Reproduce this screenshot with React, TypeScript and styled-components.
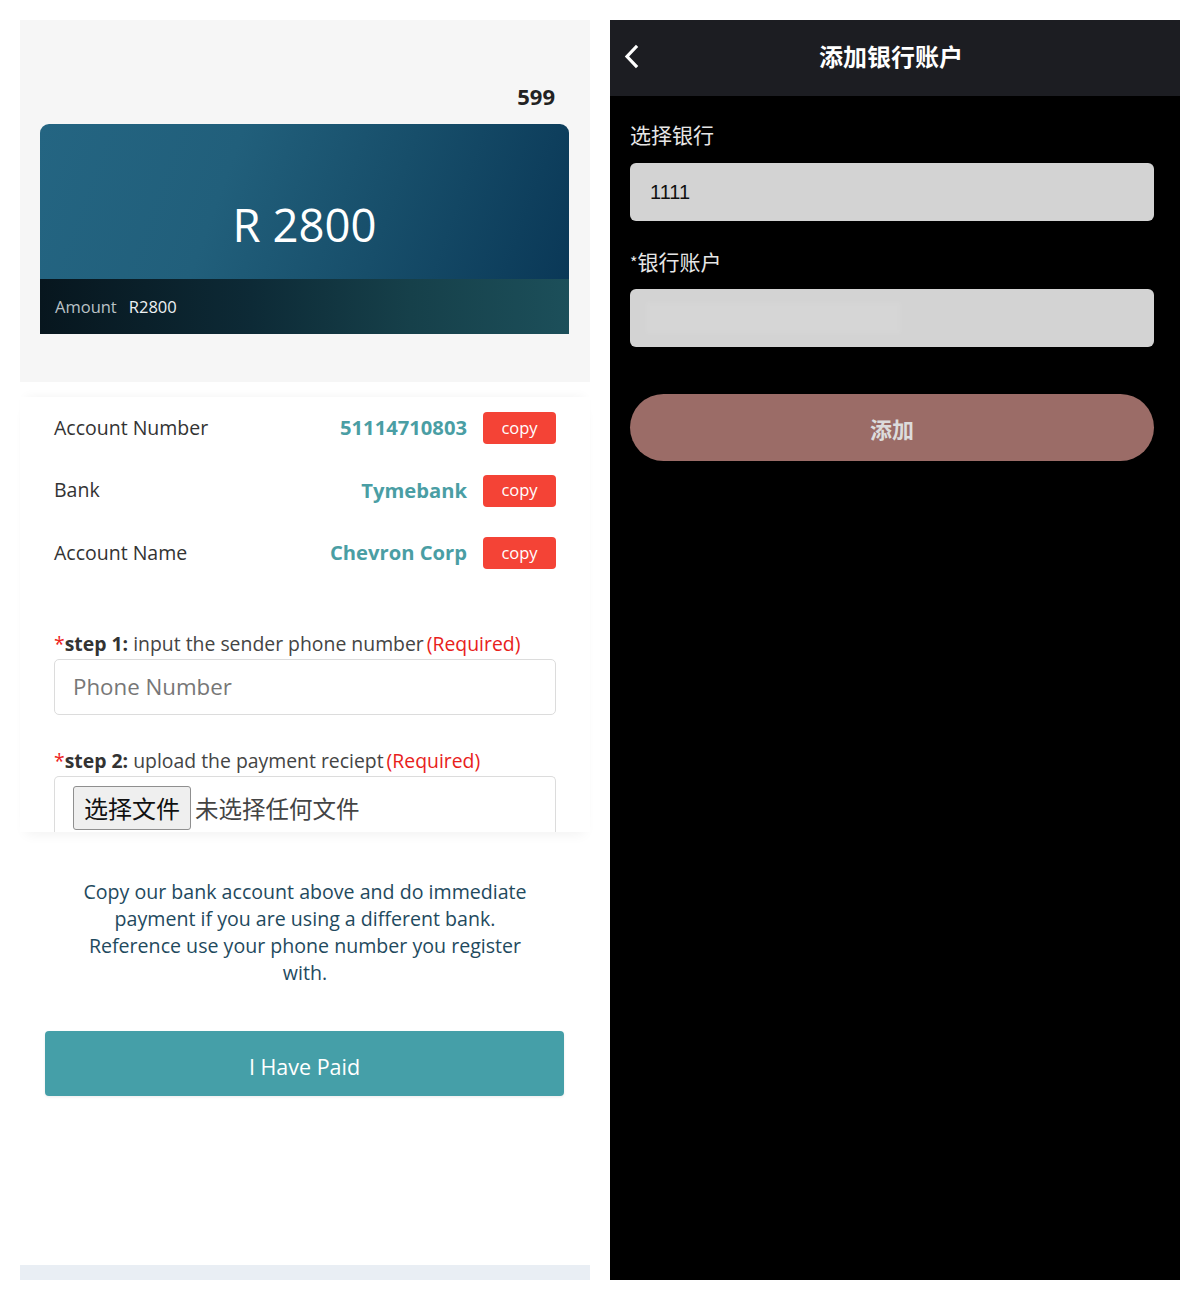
import React from "react";
import styled, { createGlobalStyle } from "styled-components";

const Global = createGlobalStyle`
  html, body { margin: 0; padding: 0; background: #ffffff; }
  * { box-sizing: border-box; }
  body { font-family: "Open Sans", "Noto Sans CJK SC", sans-serif; }
`;

const Page = styled.div`
  display: flex;
  gap: 20px;
  padding: 20px;
  width: 1200px;
`;

const LeftPanel = styled.div`
  width: 570px;
  height: 1260px;
  background: #ffffff;
  display: flex;
  flex-direction: column;
`;

const TopSection = styled.div`
  background: #f6f6f6;
  height: 362px;
  padding: 62px 20px 0 20px;
  display: flex;
  flex-direction: column;
`;

const Count = styled.div`
  font-family: "Open Sans", sans-serif;
  font-weight: 700;
  font-size: 22px;
  line-height: 30px;
  color: #222;
  text-align: right;
  padding-right: 15px;
  margin-bottom: 13px;
  margin-top: -1px;
`;

const AmountCard = styled.div`
  width: 529px;
  height: 210px;
  border-radius: 9px 9px 0 0;
  overflow: hidden;
  display: flex;
  flex-direction: column;
`;

const CardTop = styled.div`
  height: 155px;
  background: linear-gradient(110deg, #246582 0%, #215f7b 35%, #174e6a 65%, #0a3857 100%);
  display: flex;
  justify-content: center;
  padding-top: 70px;
`;

const BigAmount = styled.div`
  font-family: "Open Sans", sans-serif;
  font-size: 45.5px;
  line-height: 60px;
  height: 60px;
  color: #ffffff;
`;

const CardBand = styled.div`
  height: 55px;
  background: linear-gradient(90deg, #07161e 0%, #0d2a36 40%, #16404a 70%, #1c4f5a 100%);
  display: flex;
  align-items: center;
  gap: 12px;
  padding-left: 15px;
  font-size: 16.5px;
`;

const BandLabel = styled.span<{ $bright?: boolean }>`
  color: ${(p) => (p.$bright ? "#eef2f4" : "#b9c2c6")};
`;

const InfoCard = styled.div`
  margin-top: 15px;
  background: #fff;
  box-shadow: 0 -6px 10px -6px rgba(0, 0, 0, 0.05), 0 8px 12px -6px rgba(0, 0, 0, 0.06);
  padding: 0 34px;
  height: 435px;
  display: flex;
  flex-direction: column;
`;

const Row = styled.div`
  height: 62.5px;
  display: flex;
  align-items: center;
`;

const RowLabel = styled.div`
  flex: 1;
  font-size: 19.5px;
  color: #333;
  margin-top: -2px;
`;

const RowValue = styled.div`
  font-size: 20.2px;
  font-weight: 700;
  color: #4a9ea4;
  margin-right: 16px;
  margin-top: -2px;
`;

const CopyBtn = styled.button`
  width: 73px;
  height: 32px;
  border: none;
  border-radius: 4px;
  background: #f44336;
  color: #fff;
  font-family: "Open Sans", sans-serif;
  font-size: 16.5px;
  padding: 0 0 2px 0;
`;

const StepLabel = styled.div<{ $top: number }>`
  margin-top: ${(p) => p.$top}px;
  font-size: 19.4px;
  line-height: 24px;
  color: #444;
  margin-bottom: 3px;
`;

const Star = styled.span`
  color: #e22;
`;

const StepBold = styled.b`
  color: #333;
`;

const Required = styled.span`
  color: #e8211b;
  margin-left: 3px;
`;

const TextInput = styled.input`
  width: 100%;
  height: 56px;
  border: 1px solid #dcdcdc;
  border-radius: 5px;
  padding: 0 18px;
  font-family: "Open Sans", sans-serif;
  font-size: 22.3px;
  color: #333;
  outline: none;
  &::placeholder { color: #777; }
`;

const FileBox = styled.div`
  height: 56px;
  border: 1px solid #dcdcdc;
  border-radius: 5px 5px 0 0;
  border-bottom: none;
  padding: 9px 0 0 18px;
  display: flex;
  align-items: flex-start;
  gap: 4px;
`;

const FileButton = styled.button`
  height: 44px;
  padding: 0 10px;
  border: 1px solid #8f8f8f;
  border-radius: 3px;
  background: #efefef;
  font-family: "Noto Sans CJK SC", sans-serif;
  font-size: 24px;
  color: #111;
  line-height: 40px;
`;

const FileText = styled.span`
  font-family: "Noto Sans CJK SC", sans-serif;
  font-size: 23.5px;
  line-height: 44px;
  color: #444;
`;

const Note = styled.p`
  margin: 46px 0 0 0;
  padding: 0 58px;
  text-align: center;
  font-size: 19.6px;
  line-height: 27px;
  color: #1f4a5e;
`;

const PaidButton = styled.button`
  margin: 45px 26px 0 25px;
  height: 65px;
  padding-top: 6px;
  border: none;
  border-radius: 4px;
  background: #459fa8;
  color: #fff;
  font-family: "Open Sans", sans-serif;
  font-size: 21.5px;
  box-shadow: 0 1px 3px rgba(0, 0, 0, 0.08);
`;

const Spacer = styled.div`
  flex: 1;
`;

const BottomBar = styled.div`
  height: 15px;
  background: #e9eef4;
`;

/* right panel */

const RightPanel = styled.div`
  width: 570px;
  height: 1260px;
  background: #000;
  display: flex;
  flex-direction: column;
  font-family: "Liberation Sans", "Noto Sans CJK SC", sans-serif;
`;

const Header = styled.div`
  height: 76px;
  background: #1c1d22;
  display: flex;
  align-items: center;
  justify-content: center;
  position: relative;
`;

const BackIcon = styled.svg`
  position: absolute;
  left: 14px;
  top: 24px;
`;

const Title = styled.div`
  font-family: "Noto Sans CJK SC", sans-serif;
  font-weight: 700;
  font-size: 24px;
  line-height: 30px;
  color: #fff;
  margin: -5px 0 0 -8px;
`;

const Form = styled.div`
  padding: 20px 26px 0 20px;
  display: flex;
  flex-direction: column;
`;

const FieldLabel = styled.div<{ $top: number }>`
  margin-top: ${(p) => p.$top}px;
  font-family: "Noto Sans CJK SC", sans-serif;
  font-size: 21px;
  line-height: 28px;
  color: #e6e6e6;
  margin-bottom: ${(p) => 13 + (6 - p.$top > 0 ? 6 - p.$top : 0)}px;
`;

const SmallStar = styled.span`
  font-size: 16px;
  vertical-align: 1px;
`;

const DarkInput = styled.div`
  height: 58px;
  border-radius: 6px;
  background: #d3d3d3;
  display: flex;
  align-items: center;
  padding-left: 20px;
  font-family: "Liberation Sans", sans-serif;
  font-size: 20px;
  color: #111;
`;

const Blur = styled.div`
  width: 255px;
  height: 32px;
  margin-left: -4px;
  background: rgba(255, 255, 255, 0.07);
  filter: blur(2px);
`;

const AddButton = styled.button`
  margin-top: 47px;
  height: 67px;
  border: none;
  border-radius: 34px;
  background: #9b6c67;
  color: #dcdcdc;
  font-family: "Noto Sans CJK SC", sans-serif;
  font-weight: 700;
  font-size: 22px;
`;

const rows = [
  { label: "Account Number", value: "51114710803" },
  { label: "Bank", value: "Tymebank" },
  { label: "Account Name", value: "Chevron Corp" },
];

export default function App() {
  return (
    <>
      <Global />
      <Page>
        <LeftPanel>
          <TopSection>
            <Count>599</Count>
            <AmountCard>
              <CardTop>
                <BigAmount>R 2800</BigAmount>
              </CardTop>
              <CardBand>
                <BandLabel>Amount</BandLabel>
                <BandLabel $bright>R2800</BandLabel>
              </CardBand>
            </AmountCard>
          </TopSection>
          <InfoCard>
            {rows.map((r) => (
              <Row key={r.label}>
                <RowLabel>{r.label}</RowLabel>
                <RowValue>{r.value}</RowValue>
                <CopyBtn>copy</CopyBtn>
              </Row>
            ))}
            <StepLabel $top={47}>
              <Star>*</Star>
              <StepBold>step 1:</StepBold> input the sender phone number
              <Required>(Required)</Required>
            </StepLabel>
            <TextInput placeholder="Phone Number" />
            <StepLabel $top={34}>
              <Star>*</Star>
              <StepBold>step 2:</StepBold> upload the payment reciept
              <Required>(Required)</Required>
            </StepLabel>
            <FileBox>
              <FileButton>选择文件</FileButton>
              <FileText>未选择任何文件</FileText>
            </FileBox>
          </InfoCard>
          <Note>
            Copy our bank account above and do immediate payment if you are using a different bank.
            <br />
            Reference use your phone number you register with.
          </Note>
          <PaidButton>I Have Paid</PaidButton>
          <Spacer />
          <BottomBar />
        </LeftPanel>
        <RightPanel>
          <Header>
            <BackIcon width="16" height="26" viewBox="0 0 16 26">
              <path d="M12 3 L3 12.5 L12 22" fill="none" stroke="#fff" strokeWidth="3.2" strokeLinecap="square" />
            </BackIcon>
            <Title>添加银行账户</Title>
          </Header>
          <Form>
            <FieldLabel $top={4}>选择银行</FieldLabel>
            <DarkInput>1111</DarkInput>
            <FieldLabel $top={26}>
              <SmallStar>*</SmallStar>银行账户
            </FieldLabel>
            <DarkInput>
              <Blur />
            </DarkInput>
            <AddButton>添加</AddButton>
          </Form>
        </RightPanel>
      </Page>
    </>
  );
}
